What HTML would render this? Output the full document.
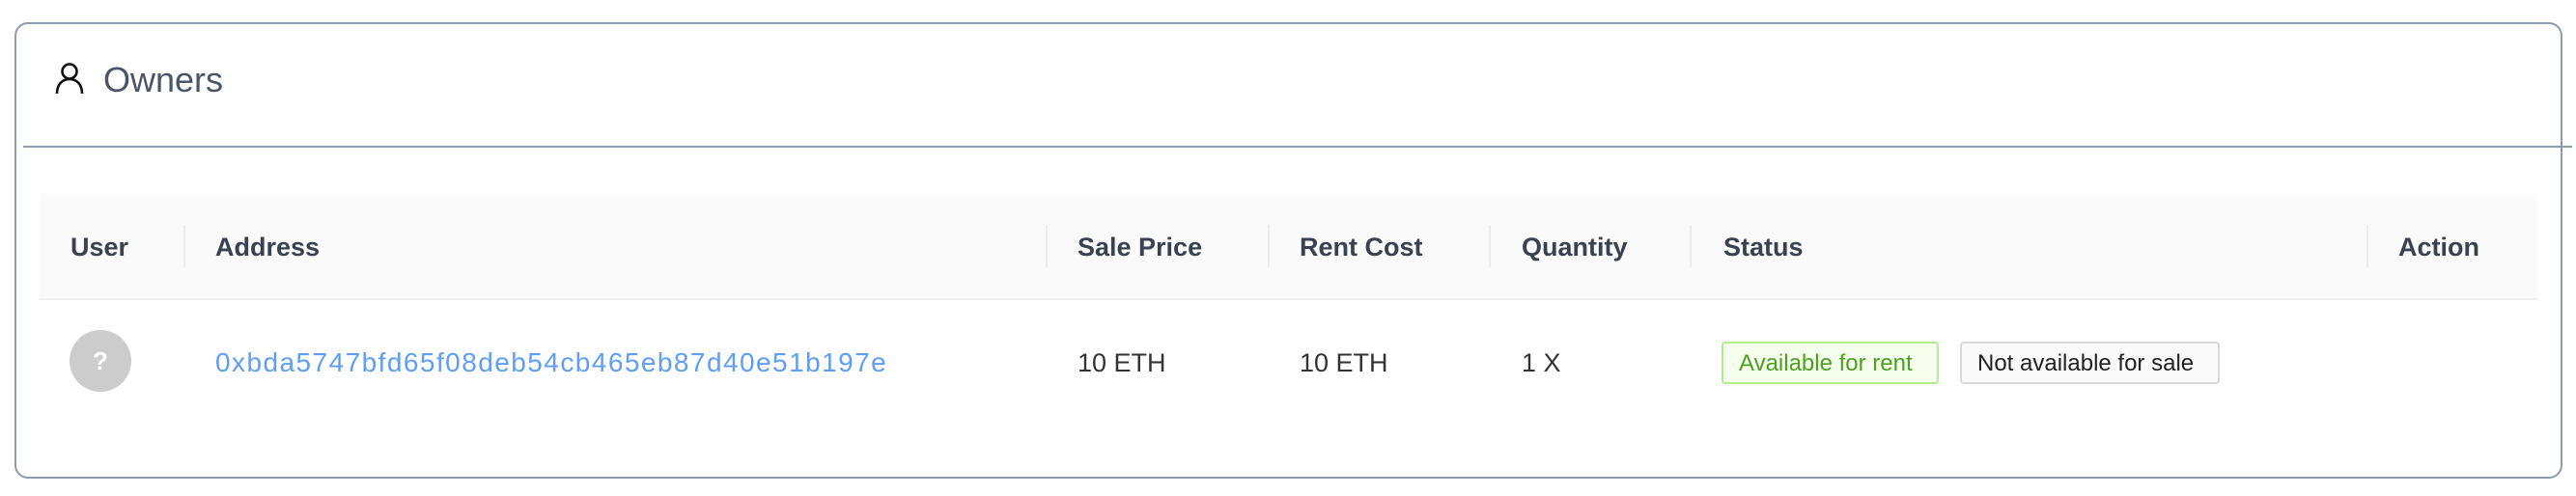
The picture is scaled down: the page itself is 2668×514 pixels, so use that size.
<!DOCTYPE html>
<html><head><meta charset="utf-8"><style>
*{margin:0;padding:0;box-sizing:border-box}
html,body{width:2668px;height:514px;background:#fff;overflow:hidden;font-family:"Liberation Sans",sans-serif}
.card{position:absolute;left:15px;top:23px;width:2639px;height:473px;border:2px solid #8e9aad;border-radius:14px}
.title{position:absolute;left:107px;top:62px;font-size:36px;color:#4a5568}
.icon{position:absolute;left:57px;top:64px}
.div{position:absolute;left:24px;top:151px;width:2640px;height:2px;background:#8e9aad}
.thead{position:absolute;left:41px;top:201px;width:2587px;height:110px;background:#fafafa;border-bottom:2px solid #f0f0f0}
.th{position:absolute;top:241px;font-size:27px;font-weight:bold;color:#3a4150}
.sep{position:absolute;top:233px;width:2px;height:44px;background:#ececec}
.td{position:absolute;top:361px;font-size:27px;color:#333}
.av{position:absolute;left:72px;top:342px;width:64px;height:64px;border-radius:50%;background:#cccccc;color:#fff;font-size:26px;font-weight:bold;text-align:center;line-height:64px}
.link{position:absolute;left:223px;top:360px;font-size:28px;letter-spacing:1.45px;color:#5f9ef4}
.tag{position:absolute;top:354px;height:44px;font-size:24px;line-height:42px;padding:0 16px;border:2px solid;border-radius:4px}
</style></head><body>
<div class="card"></div>
<svg class="icon" width="30" height="34" viewBox="0 0 30 34" fill="none" stroke="#111" stroke-width="2.6"><circle cx="15" cy="10" r="7.5"/><path d="M2 33 C2 23 8 18 15 18 C22 18 28 23 28 33"/></svg>
<div class="title">Owners</div>
<div class="div"></div>
<div class="thead"></div>
<div class="th" style="left:73px">User</div>
<div class="th" style="left:223px">Address</div>
<div class="th" style="left:1116px">Sale Price</div>
<div class="th" style="left:1346px">Rent Cost</div>
<div class="th" style="left:1576px">Quantity</div>
<div class="th" style="left:1785px">Status</div>
<div class="th" style="left:2484px">Action</div>
<div class="sep" style="left:190px"></div>
<div class="sep" style="left:1083px"></div>
<div class="sep" style="left:1313px"></div>
<div class="sep" style="left:1542px"></div>
<div class="sep" style="left:1750px"></div>
<div class="sep" style="left:2451px"></div>
<div class="av">?</div>
<div class="link">0xbda5747bfd65f08deb54cb465eb87d40e51b197e</div>
<div class="td" style="left:1116px">10 ETH</div>
<div class="td" style="left:1346px">10 ETH</div>
<div class="td" style="left:1576px">1 X</div>
<div class="tag" style="left:1783px;width:225px;background:#f6ffed;border-color:#b7eb8f;color:#4ba01f">Available for rent</div>
<div class="tag" style="left:2030px;width:269px;background:#fafafa;border-color:#d9d9d9;color:#222">Not available for sale</div>
</body></html>
